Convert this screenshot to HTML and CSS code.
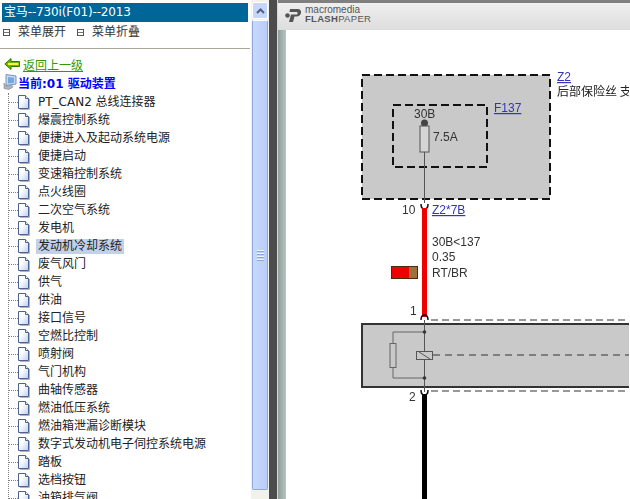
FILE: index.html
```html
<!DOCTYPE html>
<html lang="en">

<head>
    <meta charset="UTF-8">
    <title>宝马--730i(F01)--2013</title>
    <link rel="stylesheet" href="styles.css">
</head>

<body>
    <svg class="icon-defs" width="0" height="0">
        <defs>
            <linearGradient id="doc-fill" x1="0" y1="0" x2="1" y2="1">
                <stop offset=".35" stop-color="#ffffff" />
                <stop offset="1" stop-color="#b9d0f3" />
            </linearGradient>
        </defs>
        <symbol id="doc" viewBox="0 0 12 15">
            <path d="M2 14.500H11.500V4" fill="none" stroke="#b4b4b4" />
            <path d="M.5 .5H7.500L10.500 3.500V13.500H.5Z" fill="url(#doc-fill)" stroke="#4f6390" />
            <path d="M7.500 .5V3.500H10.500" fill="#eaf1fc" stroke="#4f6390" />
        </symbol>
    </svg>

    <div class="menu">
        <div class="menu-title">宝马--730i(F01)--2013</div>
        <div class="menu-tools">
            <span class="menu-tool"><span class="tool-box"></span>菜单展开</span>
            <span class="menu-tool"><span class="tool-box"></span>菜单折叠</span>
        </div>
        <div class="menu-back">
            <svg width="16" height="12" viewBox="0 0 16 12">
                <path d="M.8 6L7 .5V3.500H15.500V8.500H7V11.500Z" fill="#6fb400" stroke="#2f7d00" />
                <path d="M4 6H14.500" stroke="#f6f04a" stroke-width="2" />
            </svg>
            <a class="back-link">返回上一级</a>
        </div>
        <div class="menu-current">
            <svg width="14" height="16" viewBox="0 0 14 16">
                <path d="M3 .5L13 2V10L3 11.500Z" fill="#c4d9f2" stroke="#8091ad" />
                <path d="M5 3L11 3.800V8.800L5 9.500Z" fill="#6fa9e2" />
                <path d="M1 9V14.500L6 15.500L10 13L9 11.500L3 12Z" fill="#aeb4c2" stroke="#7d8494" stroke-width=".6" />
            </svg>
            <span>当前:01 驱动装置</span>
        </div>
        <ul class="tree">
            <li class="tree-row"><span class="tree-dash"></span><svg class="tree-doc"><use href="#doc" /></svg><span class="tree-text">PT_CAN2 总线连接器</span></li>
            <li class="tree-row"><span class="tree-dash"></span><svg class="tree-doc"><use href="#doc" /></svg><span class="tree-text">爆震控制系统</span></li>
            <li class="tree-row"><span class="tree-dash"></span><svg class="tree-doc"><use href="#doc" /></svg><span class="tree-text">便捷进入及起动系统电源</span></li>
            <li class="tree-row"><span class="tree-dash"></span><svg class="tree-doc"><use href="#doc" /></svg><span class="tree-text">便捷启动</span></li>
            <li class="tree-row"><span class="tree-dash"></span><svg class="tree-doc"><use href="#doc" /></svg><span class="tree-text">变速箱控制系统</span></li>
            <li class="tree-row"><span class="tree-dash"></span><svg class="tree-doc"><use href="#doc" /></svg><span class="tree-text">点火线圈</span></li>
            <li class="tree-row"><span class="tree-dash"></span><svg class="tree-doc"><use href="#doc" /></svg><span class="tree-text">二次空气系统</span></li>
            <li class="tree-row"><span class="tree-dash"></span><svg class="tree-doc"><use href="#doc" /></svg><span class="tree-text">发电机</span></li>
            <li class="tree-row"><span class="tree-dash"></span><svg class="tree-doc"><use href="#doc" /></svg><span class="tree-text tree-active">发动机冷却系统</span></li>
            <li class="tree-row"><span class="tree-dash"></span><svg class="tree-doc"><use href="#doc" /></svg><span class="tree-text">废气风门</span></li>
            <li class="tree-row"><span class="tree-dash"></span><svg class="tree-doc"><use href="#doc" /></svg><span class="tree-text">供气</span></li>
            <li class="tree-row"><span class="tree-dash"></span><svg class="tree-doc"><use href="#doc" /></svg><span class="tree-text">供油</span></li>
            <li class="tree-row"><span class="tree-dash"></span><svg class="tree-doc"><use href="#doc" /></svg><span class="tree-text">接口信号</span></li>
            <li class="tree-row"><span class="tree-dash"></span><svg class="tree-doc"><use href="#doc" /></svg><span class="tree-text">空燃比控制</span></li>
            <li class="tree-row"><span class="tree-dash"></span><svg class="tree-doc"><use href="#doc" /></svg><span class="tree-text">喷射阀</span></li>
            <li class="tree-row"><span class="tree-dash"></span><svg class="tree-doc"><use href="#doc" /></svg><span class="tree-text">气门机构</span></li>
            <li class="tree-row"><span class="tree-dash"></span><svg class="tree-doc"><use href="#doc" /></svg><span class="tree-text">曲轴传感器</span></li>
            <li class="tree-row"><span class="tree-dash"></span><svg class="tree-doc"><use href="#doc" /></svg><span class="tree-text">燃油低压系统</span></li>
            <li class="tree-row"><span class="tree-dash"></span><svg class="tree-doc"><use href="#doc" /></svg><span class="tree-text">燃油箱泄漏诊断模块</span></li>
            <li class="tree-row"><span class="tree-dash"></span><svg class="tree-doc"><use href="#doc" /></svg><span class="tree-text">数字式发动机电子伺控系统电源</span></li>
            <li class="tree-row"><span class="tree-dash"></span><svg class="tree-doc"><use href="#doc" /></svg><span class="tree-text">踏板</span></li>
            <li class="tree-row"><span class="tree-dash"></span><svg class="tree-doc"><use href="#doc" /></svg><span class="tree-text">选档按钮</span></li>
            <li class="tree-row"><span class="tree-dash"></span><svg class="tree-doc"><use href="#doc" /></svg><span class="tree-text">油箱排气阀</span></li>
        </ul>
    </div>

    <div class="scrollbar">
        <div class="scroll-button">
            <svg width="9" height="6" viewBox="0 0 9 6">
                <path d="M1 5L4.500 1.500L8 5" fill="none" stroke="#4d6185" stroke-width="2" />
            </svg>
        </div>
        <div class="scroll-thumb">
            <span class="grip"></span>
            <span class="grip"></span>
            <span class="grip"></span>
            <span class="grip"></span>
        </div>
    </div>

    <div class="viewer">
        <div class="viewer-head">
            <svg width="17" height="15" viewBox="0 0 17 15">
                <path d="M5 1H13C17.500 1 17 8.500 12 8.500H9.500L8 14H4L6 6.500H11.500C13 6.500 13 4 11.500 4H4.500Z" fill="#555555" />
                <circle cx="2.500" cy="7.500" r="2.300" fill="#555555" />
            </svg>
            <div class="brand">
                <span class="brand-top">macromedia</span>
                <span class="brand-name"><b>FLASH</b>PAPER</span>
            </div>
        </div>
        <div class="viewer-body">
            <div class="viewer-strip"></div>
            <div class="viewer-page">
                <svg class="diagram" width="343" height="469" viewBox="287 30 343 469">
                    <rect x="363" y="75" width="188" height="124" fill="#c9c9c9" stroke="#111" stroke-width="2" stroke-dasharray="8 4" />
                    <rect x="394" y="105" width="94" height="62" fill="none" stroke="#111" stroke-width="2" stroke-dasharray="8 4" />
                    <path d="M425.500 123V203" stroke="#555" stroke-width="1" />
                    <circle cx="425.500" cy="123" r="3.500" fill="#444" />
                    <rect x="421" y="126" width="9" height="26" fill="#d5d5d5" stroke="#555" />
                    <text class="dia-text" x="415" y="118">30B</text>
                    <text class="dia-text" x="434" y="141">7.5A</text>
                    <text class="dia-link" x="495" y="112">F137</text>
                    <text class="dia-link" x="558" y="81">Z2</text>
                    <text class="dia-note" x="558" y="96">后部保险丝 支架</text>

                    <text class="dia-text" x="403" y="214">10</text>
                    <text class="dia-link" x="433" y="214">Z2*7B</text>
                    <path d="M422 204C422 208 424 209 425.500 209C427 209 429 208 429 204" fill="none" stroke="#111" stroke-width="1.500" />
                    <rect x="423" y="208" width="5" height="109" fill="#ee0000" />
                    <text class="dia-text" x="433" y="246">30B&lt;137</text>
                    <text class="dia-text" x="433" y="261">0.35</text>
                    <text class="dia-text" x="433" y="277">RT/BR</text>
                    <rect x="392.500" y="266.500" width="26" height="12" fill="#f00000" stroke="#4a2a10" />
                    <rect x="410" y="267" width="8" height="11" fill="#a0703a" />

                    <text class="dia-text" x="411" y="315">1</text>
                    <path d="M422 320C422 316 424 315 425.500 315C427 315 429 316 429 320" fill="none" stroke="#111" stroke-width="1.500" />
                    <path d="M432 320H630" stroke="#777" stroke-width="1.500" stroke-dasharray="7 4" />

                    <rect x="363" y="324" width="270" height="63" fill="#c9c9c9" stroke="#333" stroke-width="2" />
                    <path d="M425.500 320V392" stroke="#555" stroke-width="1" />
                    <path d="M425.500 332H394V378H425.500" fill="none" stroke="#666" stroke-width="1" />
                    <rect x="391" y="343.500" width="6" height="24" fill="#c9c9c9" stroke="#666" />
                    <circle cx="425.500" cy="332" r="1.800" fill="#333" />
                    <circle cx="425.500" cy="378" r="1.800" fill="#333" />
                    <rect x="417.500" y="351.500" width="16" height="8" fill="#c9c9c9" stroke="#555" />
                    <path d="M420 352L431 359" stroke="#555" stroke-width="1" />
                    <path d="M434 355H630" stroke="#666" stroke-width="1.500" stroke-dasharray="7 5" />

                    <path d="M422 390C422 394 424 395 425.500 395C427 395 429 394 429 390" fill="none" stroke="#111" stroke-width="1.500" />
                    <path d="M432 391H630" stroke="#777" stroke-width="1.500" stroke-dasharray="7 4" />
                    <text class="dia-text" x="410" y="401">2</text>
                    <rect x="423" y="394" width="5" height="105" fill="#000" />
                </svg>
            </div>
        </div>
    </div>
</body>

</html>
```

FILE: styles.css
```css
html,
body {
    height: 100%;
}

body {
    margin: 0;
    display: flex;
    overflow: hidden;
    background: #FFFFFF;
    color: #222222;
    font-family: "DejaVu Sans", "Noto Sans CJK SC", sans-serif;
    font-size: 12px;
}

.icon-defs {
    position: absolute;
}

.menu {
    flex: none;
    width: 251px;
    height: 499px;
    padding-top: 3px;
    box-sizing: border-box;
    overflow: hidden;
    border-right: 1px solid #FFFFFF;
}

.menu-title {
    height: 19px;
    margin: 0 2px 0 2px;
    padding-left: 2px;
    background: #006699;
    color: #FFFFFF;
    line-height: 19px;
    letter-spacing: -.15px;
}

.menu-tools {
    display: flex;
    gap: 11px;
    height: 27px;
    padding: 1px 0 0 3px;
    box-sizing: border-box;
    border-bottom: 1px solid #ACA899;
    line-height: 18px;
}

.menu-tool {
    display: flex;
    align-items: center;
    height: 18px;
    color: #333333;
}

.tool-box {
    width: 5px;
    height: 5px;
    margin-right: 8px;
    border: 1px solid #555555;
    background: linear-gradient(#FFFFFF 40%, #777777 40%, #777777 55%, #FFFFFF 55%);
}

.menu-back {
    display: flex;
    align-items: center;
    gap: 3px;
    height: 16px;
    margin-top: 7px;
    padding-left: 4px;
}

.back-link {
    color: #339900;
    text-decoration: underline;
}

.menu-current {
    display: flex;
    align-items: center;
    gap: 1px;
    height: 18px;
    margin-top: 1px;
    padding-left: 3px;
    color: #0000FF;
    font-weight: bold;
}

.tree {
    list-style: none;
    margin: 2px 0 0 8px;
    padding: 0;
    border-left: 1px dotted #808080;
}

.tree-row {
    display: flex;
    align-items: center;
    height: 18px;
}

.tree-dash {
    width: 9px;
    border-top: 1px dotted #808080;
}

.tree-doc {
    flex: none;
    width: 12px;
    height: 15px;
    margin-right: 6px;
}

.tree-text {
    padding: 0 2px;
    line-height: 15px;
    white-space: nowrap;
}

.tree-active {
    background: #C3D1E8;
}

.scrollbar {
    flex: none;
    display: flex;
    flex-direction: column;
    width: 18px;
    height: 499px;
    padding: 2px 1px 0 1px;
    box-sizing: border-box;
    background: #F3F2EA;
}

.scroll-button {
    display: flex;
    align-items: center;
    justify-content: center;
    height: 15px;
    border: 1px solid #FFFFFF;
    border-radius: 2px;
    background: #C6D6F8;
}

.scroll-thumb {
    display: flex;
    flex-direction: column;
    align-items: center;
    justify-content: center;
    gap: 1px;
    height: 468px;
    margin-top: 1px;
    border: 1px solid #8FA6DB;
    border-top-color: #FFFFFF;
    border-radius: 2px;
    background: linear-gradient(90deg, #C9D9FB, #B9CDF9);
}

.grip {
    width: 7px;
    height: 1px;
    background: #EEF3FE;
    border-bottom: 1px solid #8FA6DB;
}

.viewer {
    flex: 1;
    display: flex;
    flex-direction: column;
    min-width: 0;
    height: 499px;
    box-sizing: border-box;
    padding-top: 3px;
    background: #808080;
    border-left: 8px solid #4C4C4C;
    border-right: 0;
    padding-left: 1px;
    box-shadow: inset 1px 0 0 #D8D8D0;
}

.viewer-head {
    flex: none;
    display: flex;
    align-items: center;
    gap: 3px;
    height: 27px;
    padding: 0 0 3px 7px;
    box-sizing: border-box;
    background: linear-gradient(#EFEFEF, #DDDDDD);
}

.brand {
    display: flex;
    flex-direction: column;
    color: #555555;
    font-family: "Liberation Sans", sans-serif;
}

.brand-top {
    font-size: 10px;
    line-height: 8px;
}

.brand-name {
    font-size: 9.500px;
    line-height: 10px;
    letter-spacing: .3px;
}

.viewer-body {
    flex: 1;
    display: flex;
    min-height: 0;
}

.viewer-strip {
    flex: none;
    width: 8px;
    background: linear-gradient(90deg, #8F9F9A, #B8C4C0);
}

.viewer-page {
    flex: 1;
    min-width: 0;
    overflow: hidden;
    background: #FFFFFF;
}

.diagram {
    display: block;
    filter: blur(.3px);
}

.dia-text {
    fill: #333333;
    font-family: "Liberation Sans", sans-serif;
    font-size: 12px;
}

.dia-link {
    fill: #3333BB;
    font-family: "Liberation Sans", sans-serif;
    font-size: 12px;
    text-decoration: underline;
}

.dia-note {
    fill: #222222;
    font-family: "Noto Sans CJK SC", sans-serif;
    font-size: 12px;
}
```
